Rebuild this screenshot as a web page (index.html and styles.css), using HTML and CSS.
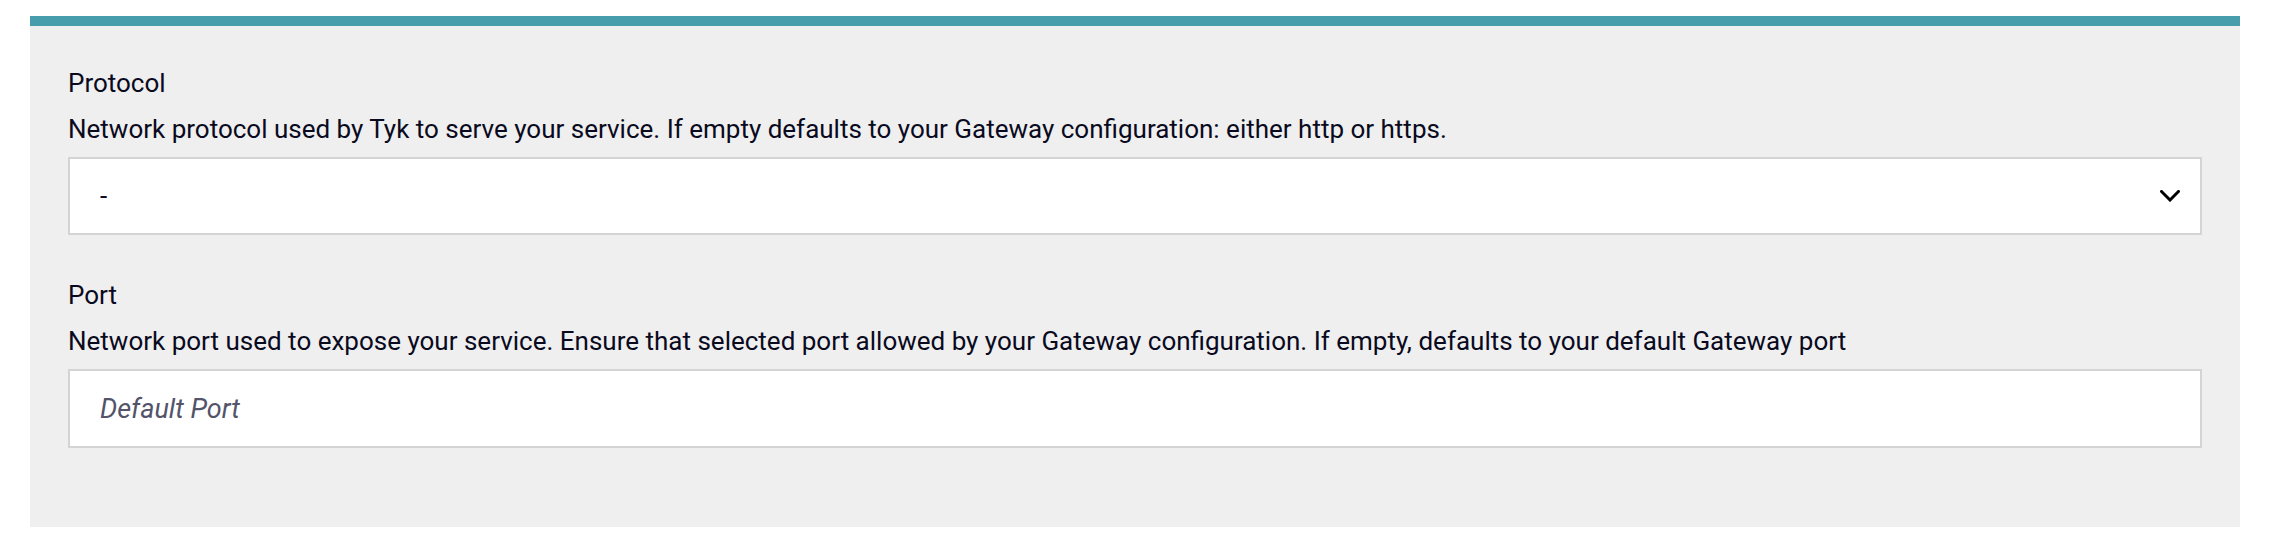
FILE: index.html
```html
<!DOCTYPE html>
<html lang="en">
<head>
<meta charset="utf-8">
<title>Protocol settings</title>
<link rel="stylesheet" href="styles.css">
</head>
<body>
<div class="page">
  <section class="panel">
    <div class="field">
      <label class="field-label" for="protocol">Protocol</label>
      <p class="field-help">Network protocol used by Tyk to serve your service. If empty defaults to your Gateway configuration: either http or https.</p>
      <div class="select-wrap">
        <select id="protocol" class="control select">
          <option>-</option>
          <option>http</option>
          <option>https</option>
        </select>
        <svg class="chevron" width="20" height="12" viewBox="0 0 20 12" aria-hidden="true"><path d="M1.5 1.5 L10 10 L18.5 1.5" fill="none" stroke="#000" stroke-width="3" stroke-linecap="square"/></svg>
      </div>
    </div>
    <div class="field">
      <label class="field-label" for="port">Port</label>
      <p class="field-help">Network port used to expose your service. Ensure that selected port allowed by your Gateway configuration. If empty, defaults to your default Gateway port</p>
      <input id="port" class="control input" type="text" placeholder="Default Port">
    </div>
  </section>
</div>
</body>
</html>
```

FILE: styles.css
```css
* { box-sizing: border-box; }

html, body {
  margin: 0;
  padding: 0;
  background: #ffffff;
}

body {
  font-family: Roboto, "Liberation Sans", Arial, sans-serif;
  color: #0a0a1e;
}

.page {
  padding: 16px 30px 22px;
}

.panel {
  background: #efefef;
  border-top: 10px solid #489dad;
  padding: 38px 38px 79px;
  display: flex;
  flex-direction: column;
  gap: 41px;
}

.field {
  display: flex;
  flex-direction: column;
}

.field-label {
  font-size: 26px;
  line-height: 39px;
  color: #0a0a1e;
}

.field-help {
  margin: 7px 0 8px;
  font-size: 26px;
  line-height: 39px;
  color: #0a0a1e;
}

.select-wrap {
  position: relative;
}

.control {
  display: block;
  width: 100%;
  height: 79px;
  margin: 0;
  border: 2px solid #d4d4d4;
  border-radius: 0;
  background: #ffffff;
  padding: 0 60px 0 30px;
  font-family: Roboto, "Liberation Sans", Arial, sans-serif;
  font-size: 26px;
  color: #0a0a1e;
  outline: none;
}

.select {
  -webkit-appearance: none;
  appearance: none;
  height: 78px;
}

.input::placeholder {
  color: #53536a;
  font-style: italic;
  font-size: 27px;
  opacity: 1;
}

.chevron {
  position: absolute;
  right: 22px;
  top: 33px;
  pointer-events: none;
}
```
